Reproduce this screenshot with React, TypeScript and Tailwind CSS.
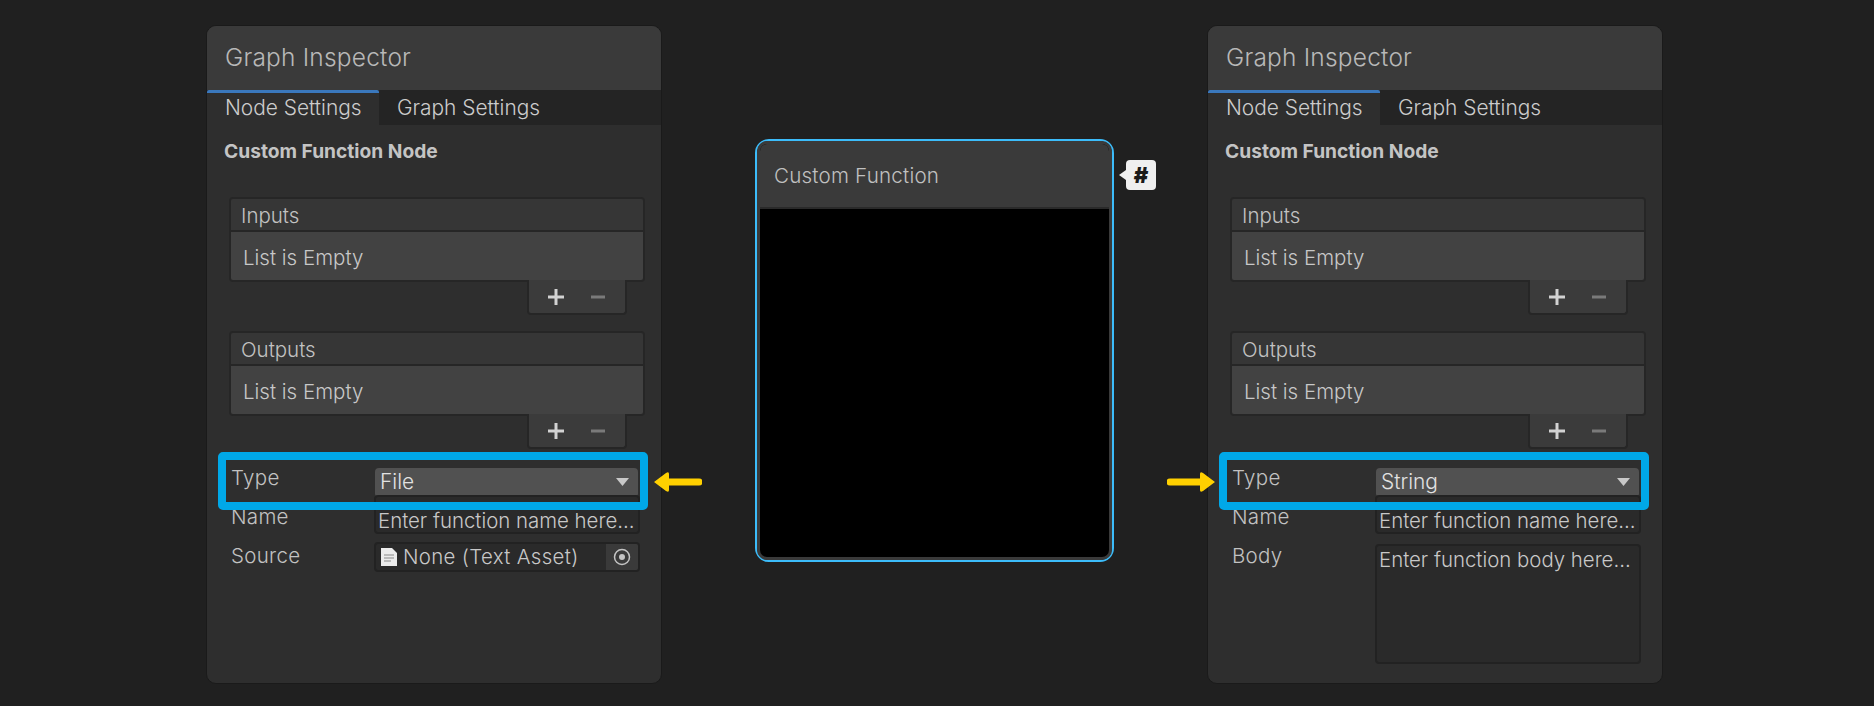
const font = { fontFamily: "Inter, 'Noto Sans', sans-serif" };

function ListBlock({ title }: { title: string }) {
  return (
    <div className="ml-[22px] w-[416px]">
      <div className="rounded-[4px] border-2 border-[#262626] overflow-hidden">
        <div className="h-[33px] bg-[#363636] border-b-2 border-[#262626] pl-[10px] text-[20.5px] leading-[33px] text-[#c2c2c2] font-light">
          {title}
        </div>
        <div className="h-[48px] bg-[#424242] pl-[12px] text-[20.5px] leading-[51px] text-[#c8c8c8] font-light">
          List is Empty
        </div>
      </div>
      <div className="ml-[298px] -mt-[2px] flex h-[35px] w-[100px] items-center rounded-b-[4px] border-2 border-t-0 border-[#262626] bg-[#3b3b3b]">
        <svg width="18" height="18" viewBox="0 0 18 18" className="ml-[18px]">
          <path d="M9 1v16M1 9h16" stroke="#d2d2d2" strokeWidth="3" />
        </svg>
        <svg width="14" height="14" viewBox="0 0 14 14" className="ml-[26px]">
          <path d="M0 7h14" stroke="#7a7a7a" strokeWidth="3" />
        </svg>
      </div>
    </div>
  );
}

function Label({ children, className }: { children: string; className: string }) {
  return (
    <div className={`absolute left-[24px] text-[20.5px] font-light leading-[24px] tracking-[0.3px] text-[#c2c2c2] ${className}`}>
      {children}
    </div>
  );
}

function Panel({ mode }: { mode: "file" | "string" }) {
  const isFile = mode === "file";
  return (
    <div className="relative flex h-[659px] w-[456px] shrink-0 flex-col rounded-[10px] border border-[#1a1a1a] bg-[#2e2e2e]">
      <div className="h-[64px] shrink-0 rounded-t-[9px] bg-[#3a3a3a] pl-[18px] text-[24.5px] font-light leading-[62px] tracking-[0.2px] text-[#b8b8b8]">
        Graph Inspector
      </div>
      <div className="flex h-[35px] shrink-0 bg-[#242424]">
        <div className="h-full w-[172px] rounded-t-[2px] border-t-[3px] border-[#3a78bd] bg-[#2e2e2e] pl-[18px] text-[20.9px] font-light leading-[30px] text-[#cccccc]">
          Node Settings
        </div>
        <div className="pl-[18px] text-[20.9px] font-light leading-[36px] text-[#cccccc]">Graph Settings</div>
      </div>
      <div className="mt-[15px] h-[24px] shrink-0 pl-[17px] text-[19.2px] font-bold leading-[23px] text-[#c4c4c4]">
        Custom Function Node
      </div>
      <div className="mt-[33px] shrink-0">
        <ListBlock title="Inputs" />
      </div>
      <div className="mt-[16px] shrink-0">
        <ListBlock title="Outputs" />
      </div>

      <div className="relative grow">
        <Label className="top-[17px]">Type</Label>
        <Label className="top-[56px]">Name</Label>
        <Label className="top-[95px]">{isFile ? "Source" : "Body"}</Label>

        <div className="absolute left-[168px] top-[19px] flex h-[30px] w-[263px] items-center justify-between rounded-[4px] border-b-2 border-[#3a3a3a] bg-[#515151] pl-[5px] pr-[9px] text-[20.9px] font-light text-[#e2e2e2]">
          <span>{isFile ? "File" : "String"}</span>
          <svg width="13" height="8" viewBox="0 0 13 8">
            <path d="M0 0h13L6.5 8z" fill="#c8c8c8" />
          </svg>
        </div>
        <div className="absolute left-[167px] top-[46px] h-[39px] w-[266px] rounded-[4px] border-2 border-[#222222] bg-[#2a2a2a] pl-[2px] pt-[10px] text-[20.4px] font-light leading-[27px] whitespace-nowrap text-[#c8c8c8]">
          Enter function name here...
        </div>
        {isFile ? (
          <div className="absolute left-[167px] top-[93px] flex h-[30px] w-[266px] items-center rounded-[4px] border-2 border-[#222222] bg-[#2a2a2a] text-[20.4px] font-light tracking-[0.35px] text-[#c8c8c8]">
            <svg width="16" height="18" viewBox="0 0 16 18" className="ml-[5px] mr-[6px]">
              <path d="M0 0h11l5 5v13H0z" fill="#ececec" />
              <path d="M3 7h10M3 10h10M3 13h7" stroke="#8a8a8a" strokeWidth="1" />
            </svg>
            <span className="mt-[1px]">None (Text Asset)</span>
            <div className="ml-auto flex h-full w-[32px] items-center justify-center rounded-r-[2px] bg-[#3a3a3a]">
              <svg width="18" height="18" viewBox="0 0 18 18">
                <circle cx="9" cy="9" r="7.5" fill="none" stroke="#c4c4c4" strokeWidth="1.5" />
                <circle cx="9" cy="9" r="3" fill="#c4c4c4" />
              </svg>
            </div>
          </div>
        ) : (
          <div className="absolute left-[167px] top-[95px] h-[120px] w-[266px] rounded-[4px] border-2 border-[#222222] bg-[#2a2a2a] pl-[2px] text-[20.4px] font-light leading-[27px] whitespace-nowrap text-[#c8c8c8]">
            Enter function body here...
          </div>
        )}

        <div className="absolute left-[11px] top-[3px] h-[58px] w-[430px] rounded-[5px] border-[8px] border-[#00a8e8]" />
        {isFile ? (
          <svg width="48" height="20" viewBox="0 0 48 20" className="absolute left-[447px] top-[23px]">
            <path d="M0 10 12 1q3-2 3 1v4.500h30a3.500 3.500 0 0 1 0 7H15V18q0 3-3 1z" fill="#ffd000" />
          </svg>
        ) : (
          <svg width="48" height="20" viewBox="0 0 48 20" className="absolute -left-[41px] top-[23px]">
            <path d="M48 10 36 1q-3-2-3 1v4.500H3a3.500 3.500 0 0 0 0 7h30V18q0 3 3 1z" fill="#ffd000" />
          </svg>
        )}
      </div>
    </div>
  );
}

function FunctionNode() {
  return (
    <div className="relative ml-[93px] mt-[114px] h-[423px] w-[359px] shrink-0 rounded-[14px] border-2 border-[#3cbcfa]">
      <div className="flex h-full flex-col overflow-hidden rounded-[10px] border-[3px] border-[#3a3a3a] bg-black">
        <div className="h-[65px] shrink-0 border-b-2 border-[#2a2a2a] bg-[#3a3a3a] pl-[14px] text-[20.6px] font-light leading-[63px] tracking-[0.2px] text-[#c0c0c0]">
          Custom Function
        </div>
      </div>
      <div className="absolute -right-[44px] top-[19px] flex h-[30px] w-[30px] items-center justify-center rounded-[4px] bg-[#efefef] text-[22px] font-black text-[#1a1a1a]">
        #
        <span className="absolute -left-[7px] top-[10px] h-0 w-0 border-y-[5px] border-r-[7px] border-y-transparent border-r-[#efefef]" />
      </div>
    </div>
  );
}

export default function App() {
  return (
    <div style={font} className="flex h-[706px] w-[1874px] items-start overflow-hidden bg-[#202020] pl-[206px] pt-[25px]">
      <Panel mode="file" />
      <FunctionNode />
      <div className="ml-[93px]">
        <Panel mode="string" />
      </div>
    </div>
  );
}
